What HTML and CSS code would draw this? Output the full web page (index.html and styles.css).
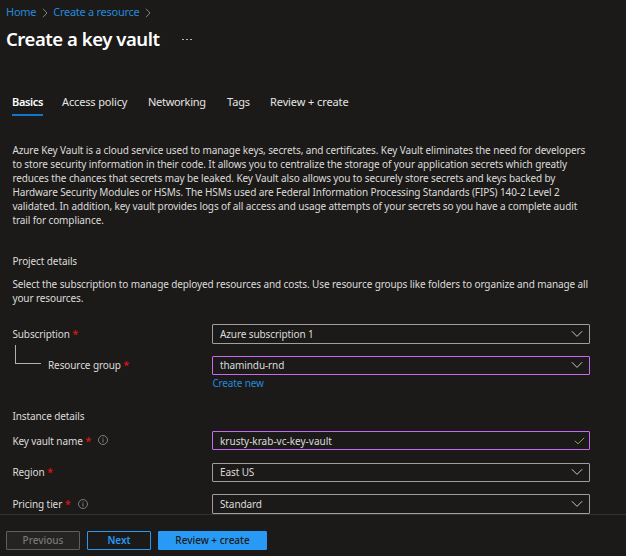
FILE: index.html
```html
<!DOCTYPE html>
<html lang="en">
<head>
<meta charset="utf-8">
<title>Create a key vault</title>
<link rel="stylesheet" href="styles.css">
</head>
<body>
<svg class="defs" width="0" height="0">
  <symbol id="crumb" viewBox="0 0 6 10"><path d="M1 .8 5 5 1 9.2"/></symbol>
  <symbol id="chevron" viewBox="0 0 12 8"><path d="M.8 1.2 6 6.4l5.200-5.200"/></symbol>
  <symbol id="check" viewBox="0 0 11 8"><path d="M.8 3.800 4 6.800 10.200.8"/></symbol>
  <symbol id="info" viewBox="0 0 10 10"><circle cx="5" cy="5" r="4.500"/><path d="M5 4.300v3.200M5 2.500v1"/></symbol>
</svg>
<div class="page">
  <nav class="breadcrumb">
    <a>Home</a><svg class="crumb"><use href="#crumb"/></svg><a class="second">Create a resource</a><svg class="crumb"><use href="#crumb"/></svg>
  </nav>
  <header class="title"><h1>Create a key vault</h1><span class="more"><i></i><i></i><i></i></span></header>
  <div class="tabs">
    <span class="tab active">Basics</span><span class="tab access">Access policy</span><span class="tab net">Networking</span><span class="tab tags">Tags</span><span class="tab review">Review + create</span>
  </div>
  <main>
    <p class="intro">Azure Key Vault is a cloud service used to manage keys, secrets, and certificates. Key Vault eliminates the need for developers<br>to store security information in their code. It allows you to centralize the storage of your application secrets which greatly<br>reduces the chances that secrets may be leaked. Key Vault also allows you to securely store secrets and keys backed by<br>Hardware Security Modules or HSMs. The HSMs used are Federal Information Processing Standards (FIPS) 140-2 Level 2<br>validated. In addition, key vault provides logs of all access and usage attempts of your secrets so you have a complete audit<br>trail for compliance.</p>
    <h2 class="project">Project details</h2>
    <p class="hint">Select the subscription to manage deployed resources and costs. Use resource groups like folders to organize and manage all<br>your resources.</p>
    <div class="row sub"><label>Subscription <b>*</b></label><div class="field tall">Azure subscription 1<svg class="chevron"><use href="#chevron"/></svg></div></div>
    <div class="row group"><label><span class="branch"></span>Resource group <b>*</b></label><div class="field edited">thamindu-rnd<svg class="chevron"><use href="#chevron"/></svg></div></div>
    <a class="new">Create new</a>
    <h2 class="instance">Instance details</h2>
    <div class="row name"><label>Key vault name <b>*</b><svg class="info"><use href="#info"/></svg></label><div class="field edited">krusty-krab-vc-key-vault<svg class="check"><use href="#check"/></svg></div></div>
    <div class="row region"><label>Region <b>*</b></label><div class="field">East US<svg class="chevron"><use href="#chevron"/></svg></div></div>
    <div class="row tier"><label>Pricing tier <b>*</b><svg class="info"><use href="#info"/></svg></label><div class="field tall">Standard<svg class="chevron"><use href="#chevron"/></svg></div></div>
  </main>
  <footer><span class="btn previous">Previous</span><span class="btn next">Next</span><span class="btn create">Review + create</span></footer>
</div>
</body>
</html>
```
FILE: styles.css
```css
* { box-sizing: border-box; }
body { margin: 0; background: #1b1a19; color: #dddbd9; font: 10px/14px "Noto Sans", sans-serif; white-space: nowrap; }
.page { width: 626px; height: 556px; overflow: hidden; display: flex; flex-direction: column; }
svg { fill: none; stroke: #c8c6c4; flex: none; }
.defs { position: absolute; }
h1, h2, p { margin: 0; font-weight: 400; font-size: inherit; }
a { color: #2489db; }
.breadcrumb { display: flex; align-items: center; height: 24px; padding-left: 6px; font-size: 11px; letter-spacing: -.27px; }
.crumb { width: 6px; height: 10px; margin: 2px 5px 0 6px; stroke: #858381; }
.title { display: flex; align-items: center; height: 30px; padding-left: 6px; }
h1 { width: 176px; font-size: 18.5px; font-weight: 600; line-height: 30px; letter-spacing: -.45px; color: #fff; }
.more { display: flex; gap: 2px; margin-top: 1px; }
.more i { width: 2px; height: 1px; background: #b5b3b1; }
.tabs { display: flex; height: 24px; margin-top: 38px; padding-left: 12px; font-size: 11px; line-height: 20px; letter-spacing: -.1px; color: #e6e4e2; }
.active { border-bottom: 2px solid #0f78cc; font-weight: 600; color: #fff; width: 31px; letter-spacing: -.35px; }
.access { margin-left: 19px; width: 86px; letter-spacing: -.15px; }
.net { width: 79px; letter-spacing: -.3px; }
.tags { width: 43px; }
main { height: 398px; padding: 27px 0 0 12.4px; letter-spacing: -.105px; }
.project { margin-top: 27px; }
.hint { margin-top: 9px; }
.row { display: flex; align-items: center; }
label { width: 199.6px; display: flex; align-items: center; }
label b { color: #e01414; font-weight: 500; font-size: 11px; margin-left: 2.5px; }
.field { width: 378px; height: 19px; border: 1px solid #a19f9d; border-radius: 1px; padding: 0 6px 0 7px; display: flex; align-items: center; justify-content: space-between; }
.tall { height: 20px; }
.edited { border-color: #c969f0; }
.group .field { padding-bottom: 1px; }
.chevron { width: 12px; height: 8px; }
.check { width: 11px; height: 8px; margin-right: -2px; stroke: #86ad3c; }
.info { width: 10px; height: 10px; margin: -1px 0 0 7px; stroke: #8a8886; stroke-width: .9; }
.sub { margin-top: 19px; }
.sub label, .group label, .region label { margin-top: -1px; }
.group { margin-top: 12px; }
.branch { width: 26px; height: 19px; margin: -21px 7px 0 2.6px; border: solid #b3b0ad; border-width: 0 0 1px 1px; }
.new { display: block; margin: 1px 0 0 200px; letter-spacing: -.15px; }
.instance { margin-top: 19px; }
.name { margin-top: 8px; }
.name .field { letter-spacing: 0; }
.region { margin-top: 13px; }
.region .field { padding-bottom: 1px; }
.tier { margin-top: 12px; }
footer { height: 42px; border-top: 1px solid #333231; padding: 16px 0 0 6px; display: flex; gap: 7px; font-weight: 600; }
.btn { height: 19px; line-height: 17px; text-align: center; border: 1px solid #2899f5; border-radius: 1px; }
.previous { width: 74px; border-color: #605e5c; background: #252423; color: #797775; font-weight: 500; }
.next { width: 64px; color: #2899f5; }
.create { width: 109px; background: #2899f5; color: #1b1a19; font-weight: 500; }
```
